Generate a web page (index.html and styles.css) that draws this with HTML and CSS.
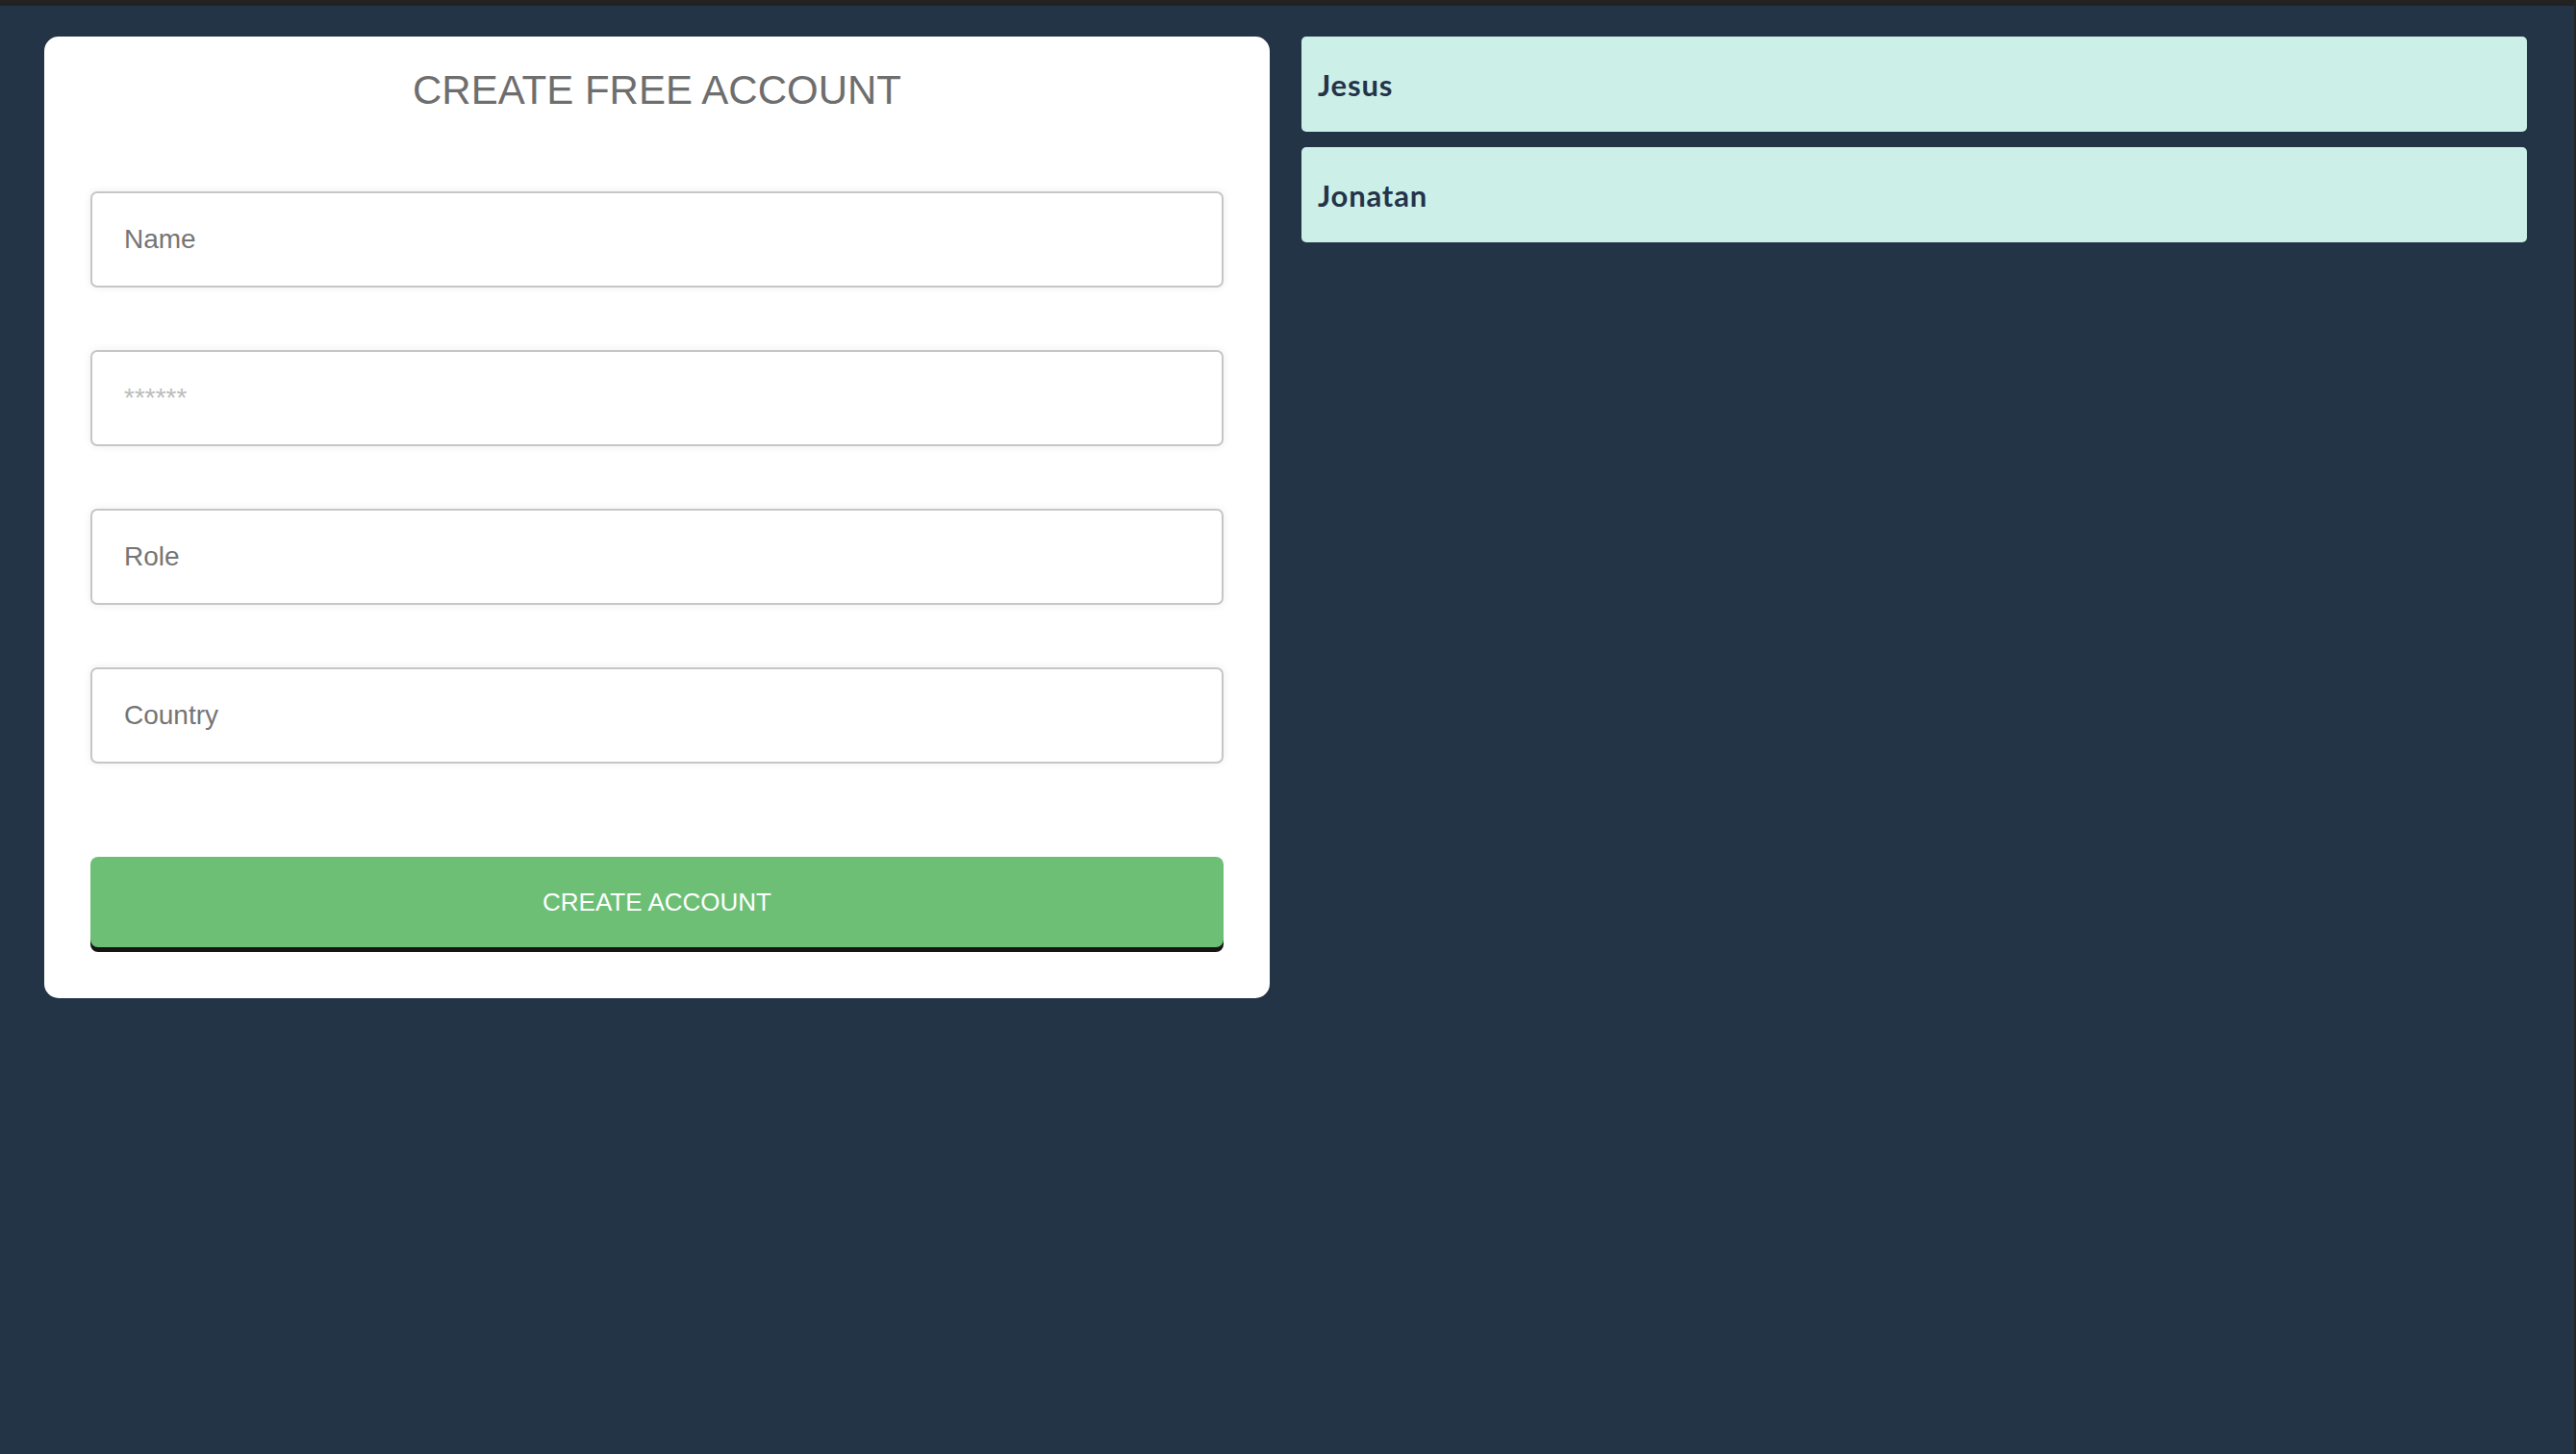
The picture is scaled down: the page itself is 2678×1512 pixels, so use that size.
FILE: index.html
```html
<!DOCTYPE html>
<html lang="en">
<head>
<meta charset="utf-8">
<title>Create free account</title>
<link rel="stylesheet" href="styles.css">
</head>
<body>
<div class="topbar"></div>
<main class="layout">
  <section class="card">
    <h1 class="card-title">CREATE FREE ACCOUNT</h1>
    <form class="form">
      <input class="field" type="text" placeholder="Name">
      <input class="field field-secret" type="text" placeholder="******">
      <input class="field" type="text" placeholder="Role">
      <input class="field" type="text" placeholder="Country">
      <button class="submit" type="button">CREATE ACCOUNT</button>
    </form>
  </section>
  <section class="list">
    <div class="list-item">Jesus</div>
    <div class="list-item">Jonatan</div>
  </section>
</main>
</body>
</html>
```
FILE: styles.css
```css
* { box-sizing: border-box; }
html, body { margin: 0; padding: 0; }
body {
  background: #243447;
  min-height: 1512px;
  border-right: 2px solid #262626;
  font-family: "Liberation Sans", Arial, sans-serif;
}
.topbar {
  height: 6px;
  background: #222222;
}
.layout {
  display: grid;
  grid-template-columns: 1fr 1fr;
  column-gap: 33px;
  align-items: start;
  padding: 32px 49px 0 46px;
}
.card {
  background: #ffffff;
  border-radius: 15px;
  padding: 33px 48px 53px;
}
.card-title {
  margin: 0 0 82px;
  font-family: "Liberation Sans", Arial, sans-serif;
  font-weight: 400;
  font-size: 42px;
  line-height: 46px;
  color: #6e6e6e;
  text-align: center;
}
.form {
  display: flex;
  flex-direction: column;
}
.field {
  display: block;
  width: 100%;
  height: 100px;
  margin: 0 0 65px;
  padding: 0 33px;
  border: 2px solid #c6c6c6;
  border-radius: 7px;
  background: #ffffff;
  box-shadow: 0 0 10px rgba(0, 0, 0, 0.07);
  font-family: "Liberation Sans", Arial, sans-serif;
  font-size: 28px;
  color: #555555;
  outline: none;
}
.field::placeholder { color: #757575; }
.field-secret::placeholder { color: #bdbdbd; }
.form .field:nth-of-type(4) { margin-bottom: 97px; }
.submit {
  display: block;
  width: 100%;
  height: 94px;
  border: none;
  border-radius: 8px;
  background: #6cbf75;
  box-shadow: 0 5px 0 #151515;
  color: #ffffff;
  font-family: "Liberation Sans", Arial, sans-serif;
  font-size: 26px;
  cursor: pointer;
}
.list {
  display: flex;
  flex-direction: column;
  gap: 16px;
}
.list-item {
  height: 99px;
  display: flex;
  align-items: center;
  padding-left: 17px;
  background: #ccf0e8;
  border-radius: 5px;
  color: #25334a;
  font-family: Lato, "Noto Sans", sans-serif;
  font-weight: 700;
  font-size: 31px;
  letter-spacing: 0.8px;
}
```
